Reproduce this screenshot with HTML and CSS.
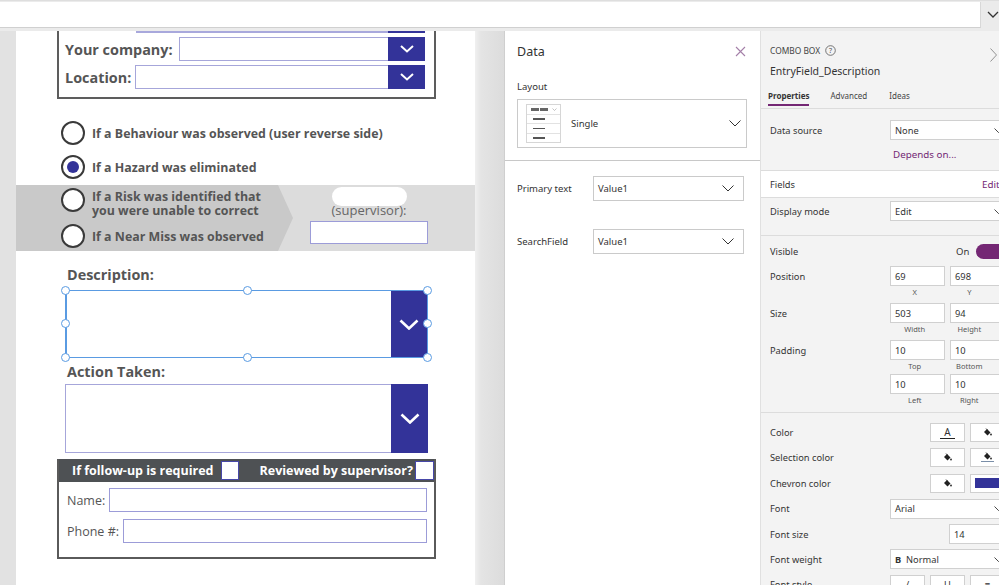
FILE: index.html
```html
<!DOCTYPE html>
<html>
<head>
<meta charset="utf-8">
<link rel="stylesheet" href="styles.css">
</head>
<body>
<div class="topbar">
  <div class="formula"></div>
  <svg class="top-chev" width="12" height="8" viewBox="0 0 12 8"><polyline points="1,1 6,6 11,1" fill="none" stroke="#333" stroke-width="1.3"/></svg>
</div>
<div class="main">
  <div class="canvas-area">
    <div class="gutter"></div>
    <div class="card">
      <div class="topbox">
        <div class="sliver"><div class="sliver-line"></div><div class="sliver-btn"></div></div>
        <div class="field-row">
          <span class="lbl lbl-company">Your company:</span>
          <div class="combo"><div class="chev-btn"><svg width="14" height="8" viewBox="0 0 14 8"><polyline points="1,1 7,6.5 13,1" fill="none" stroke="#fff" stroke-width="2"/></svg></div></div>
        </div>
        <div class="field-row">
          <span class="lbl lbl-loc">Location:</span>
          <div class="combo"><div class="chev-btn"><svg width="14" height="8" viewBox="0 0 14 8"><polyline points="1,1 7,6.5 13,1" fill="none" stroke="#fff" stroke-width="2"/></svg></div></div>
        </div>
      </div>

      <div class="radios">
        <div class="radio"><span class="circle"></span><span class="radio-text">If a Behaviour was observed (user reverse side)</span></div>
        <div class="radio"><span class="circle on"></span><span class="radio-text">If a Hazard was eliminated</span></div>
      </div>

      <div class="band">
        <div class="band-left">
          <div class="radio radio-two"><span class="circle"></span><span class="radio-text two"><span class="ln">If a Risk was identified that</span><span class="ln">you were unable to correct</span></span></div>
          <div class="radio radio-last"><span class="circle"></span><span class="radio-text">If a Near Miss was observed</span></div>
        </div>
        <div class="band-right">
          <div class="blob"></div>
          <div class="sup">(supervisor):</div>
          <div class="sup-input"></div>
        </div>
      </div>

      <div class="sec-label desc-label">Description:</div>
      <div class="bigbox selected">
        <div class="chev-btn big"><svg width="20" height="11" viewBox="0 0 20 11"><polyline points="1.5,1.5 10,9.5 18.5,1.5" fill="none" stroke="#fff" stroke-width="2.6"/></svg></div>
        <span class="handle h-tl"></span><span class="handle h-tm"></span><span class="handle h-tr"></span>
        <span class="handle h-ml"></span><span class="handle h-mr"></span>
        <span class="handle h-bl"></span><span class="handle h-bm"></span><span class="handle h-br"></span>
      </div>
      <div class="sec-label act-label">Action Taken:</div>
      <div class="bigbox plain">
        <div class="chev-btn big"><svg width="20" height="11" viewBox="0 0 20 11"><polyline points="1.5,1.5 10,9.5 18.5,1.5" fill="none" stroke="#fff" stroke-width="2.6"/></svg></div>
      </div>

      <div class="follow">
        <div class="follow-head">
          <span class="fh-text">If follow-up is required</span><span class="chk"></span>
          <span class="fh-text fh-second">Reviewed by supervisor?</span><span class="chk chk2"></span>
        </div>
        <div class="follow-row first"><span class="flbl">Name:</span><div class="finput"></div></div>
        <div class="follow-row"><span class="flbl">Phone #:</span><div class="finput"></div></div>
      </div>
    </div>
    <div class="shade"></div>
  </div>

  <div class="data-panel">
    <div class="dp-top">
      <div class="dp-head"><span class="dp-title">Data</span>
        <svg width="11" height="11" viewBox="0 0 11 11"><path d="M1 1 L10 10 M10 1 L1 10" stroke="#a47fa8" stroke-width="1.1"/></svg>
      </div>
      <div class="dp-label">Layout</div>
      <div class="layout-box">
        <div class="lay-icon">
          <div class="lay-row"><span class="d1"></span><span class="d1"></span><svg width="5" height="3" viewBox="0 0 5 3"><polyline points="0.5,0.5 2.5,2.5 4.5,0.5" fill="none" stroke="#aaa" stroke-width="0.7"/></svg></div>
          <div class="lay-row"><span class="d2"></span></div>
          <div class="lay-row"><span class="d2"></span></div>
          <div class="lay-row"><span class="d2"></span></div>
        </div>
        <span class="lay-text">Single</span>
        <svg class="dd-chev" width="12" height="7" viewBox="0 0 12 7"><polyline points="0.5,0.5 6,6 11.5,0.5" fill="none" stroke="#333" stroke-width="1"/></svg>
      </div>
    </div>
    <div class="dp-fields">
      <div class="dp-row"><span class="dp-rl">Primary text</span><div class="dp-dd"><span>Value1</span><svg width="12" height="7" viewBox="0 0 12 7"><polyline points="0.5,0.5 6,6 11.5,0.5" fill="none" stroke="#333" stroke-width="1"/></svg></div></div>
      <div class="dp-row second"><span class="dp-rl">SearchField</span><div class="dp-dd"><span>Value1</span><svg width="12" height="7" viewBox="0 0 12 7"><polyline points="0.5,0.5 6,6 11.5,0.5" fill="none" stroke="#333" stroke-width="1"/></svg></div></div>
    </div>
  </div>

  <div class="props">
    <div class="p-head">
      <div class="p-kind">COMBO BOX <svg class="qmark" width="11" height="11" viewBox="0 0 11 11"><circle cx="5.5" cy="5.5" r="4.8" fill="none" stroke="#555" stroke-width="0.8"/><text x="5.5" y="8" text-anchor="middle" font-size="7" fill="#555" font-family="Noto Sans">?</text></svg>
        <svg class="p-close" width="7" height="14" viewBox="0 0 7 14"><polyline points="0.5,0.5 6.5,7 0.5,13.5" fill="none" stroke="#888" stroke-width="0.9"/></svg></div>
      <div class="p-name">EntryField_Description</div>
      <div class="p-tabs"><span class="tab active">Properties</span><span class="tab">Advanced</span><span class="tab">Ideas</span></div>
    </div>
    <div class="p-sec sec-ds">
      <div class="p-row"><span class="p-lbl">Data source</span><div class="p-dd">None<svg width="9" height="5" viewBox="0 0 9 5"><polyline points="0.5,0.5 4.5,4.5 8.5,0.5" fill="none" stroke="#333" stroke-width="0.9"/></svg></div></div>
      <div class="depends">Depends on...</div>
    </div>
    <div class="p-sec sec-fields"><span class="p-lbl">Fields</span><span class="edit">Edit</span></div>
    <div class="p-sec sec-dm">
      <div class="p-row"><span class="p-lbl">Display mode</span><div class="p-dd">Edit<svg width="9" height="5" viewBox="0 0 9 5"><polyline points="0.5,0.5 4.5,4.5 8.5,0.5" fill="none" stroke="#333" stroke-width="0.9"/></svg></div></div>
    </div>
    <div class="p-sec sec-geo">
      <div class="p-row vis"><span class="p-lbl">Visible</span><span class="on-text">On</span><span class="toggle"><span class="knob"></span></span></div>
      <div class="p-row g"><span class="p-lbl">Position</span><div class="p-in">69</div><div class="p-in">698</div></div>
      <div class="p-cap"><span>X</span><span>Y</span></div>
      <div class="p-row g"><span class="p-lbl">Size</span><div class="p-in">503</div><div class="p-in">94</div></div>
      <div class="p-cap"><span>Width</span><span>Height</span></div>
      <div class="p-row g"><span class="p-lbl">Padding</span><div class="p-in">10</div><div class="p-in">10</div></div>
      <div class="p-cap"><span>Top</span><span>Bottom</span></div>
      <div class="p-row g g2"><span class="p-lbl"></span><div class="p-in">10</div><div class="p-in">10</div></div>
      <div class="p-cap"><span>Left</span><span>Right</span></div>
    </div>
    <div class="p-sec sec-style">
      <div class="p-row s"><span class="p-lbl">Color</span><span class="spacer"></span>
        <div class="cbtn"><span class="a-glyph">A</span></div>
        <div class="cbtn"><svg width="9" height="9" viewBox="0 0 9 9"><path d="M4 1 L7.5 4.5 L4.5 7.5 L1 4 Z" fill="#222"/><path d="M3 0.5 L4.5 2" stroke="#222" stroke-width="0.8"/><circle cx="8" cy="6.5" r="0.9" fill="#222"/></svg></div>
      </div>
      <div class="p-row s"><span class="p-lbl">Selection color</span><span class="spacer"></span>
        <div class="cbtn"><svg width="9" height="9" viewBox="0 0 9 9"><path d="M4 1 L7.5 4.5 L4.5 7.5 L1 4 Z" fill="#222"/><path d="M3 0.5 L4.5 2" stroke="#222" stroke-width="0.8"/><circle cx="8" cy="6.5" r="0.9" fill="#222"/></svg></div>
        <div class="cbtn ul"><svg width="9" height="9" viewBox="0 0 9 9"><path d="M4 1 L7.5 4.5 L4.5 7.5 L1 4 Z" fill="#222"/><path d="M3 0.5 L4.5 2" stroke="#222" stroke-width="0.8"/><circle cx="8" cy="6.5" r="0.9" fill="#222"/></svg><span class="uline"></span></div>
      </div>
      <div class="p-row s"><span class="p-lbl">Chevron color</span><span class="spacer"></span>
        <div class="cbtn"><svg width="9" height="9" viewBox="0 0 9 9"><path d="M4 1 L7.5 4.5 L4.5 7.5 L1 4 Z" fill="#222"/><path d="M3 0.5 L4.5 2" stroke="#222" stroke-width="0.8"/><circle cx="8" cy="6.5" r="0.9" fill="#222"/></svg></div>
        <div class="cbtn sw"><span class="swatch"></span></div>
      </div>
      <div class="p-row s"><span class="p-lbl">Font</span><div class="p-dd">Arial<svg width="9" height="5" viewBox="0 0 9 5"><polyline points="0.5,0.5 4.5,4.5 8.5,0.5" fill="none" stroke="#333" stroke-width="0.9"/></svg></div></div>
      <div class="p-row s"><span class="p-lbl">Font size</span><span class="spacer"></span><div class="p-in fs">14</div></div>
      <div class="p-row s"><span class="p-lbl">Font weight</span><div class="p-dd"><span><b class="bb">B</b>&nbsp; Normal</span><svg width="9" height="5" viewBox="0 0 9 5"><polyline points="0.5,0.5 4.5,4.5 8.5,0.5" fill="none" stroke="#333" stroke-width="0.9"/></svg></div></div>
      <div class="p-row s"><span class="p-lbl">Font style</span><div class="sbtn">/</div><div class="sbtn">U</div><div class="sbtn">&#8801;</div></div>
    </div>
  </div>
</div>
</body>
</html>
```
FILE: styles.css
```css
* { box-sizing: border-box; }
html, body { margin: 0; padding: 0; }
body {
  width: 999px;
  height: 585px;
  overflow: hidden;
  background: #f3f3f3;
  font-family: "Noto Sans", sans-serif;
  color: #333;
}

/* top formula bar */
.topbar {
  height: 31px;
  background: #ebebeb;
  border-top: 1px solid #dedede;
  display: flex;
  align-items: flex-start;
}
.formula {
  width: 981px;
  height: 26px;
  margin-top: 1px;
  background: #fff;
  border-bottom: 1px solid #d0d0d0;
  border-right: 1px solid #d8d8d8;
}
.top-chev { margin: 10px 0 0 6px; }

.main { display: flex; height: 554px; }

/* canvas */
.canvas-area { width: 505px; display: flex; background: #e2e2e2; flex: none; }
.gutter { width: 16px; }
.card { width: 459px; background: #fff; }
.shade {
  width: 30px;
  background: linear-gradient(to right, #f0f0f0 0, #e4e4e4 6px, #dcdcdc 100%);
  border-right: 1px solid #cfcfcf;
}

.topbox {
  margin-left: 41px;
  width: 379px;
  border: 2px solid #5d5d5d;
  border-top: none;
  padding: 0 9px 8px 6px;
}
.sliver { display: flex; height: 2px; margin-left: 71px; }
.sliver-line { flex: 1; background: #a8a8dc; }
.sliver-btn { width: 37px; background: #333399; }
.field-row { display: flex; align-items: center; height: 24px; margin-top: 4px; }
.lbl {
  font-family: "Open Sans", sans-serif;
  font-weight: 700;
  font-size: 14.4px;
  color: #555;
  white-space: nowrap;
}
.lbl-company { margin-right: 6px; }
.lbl-loc { margin-right: 4px; }
.combo {
  flex: 1;
  height: 24px;
  border: 1px solid #a6a6da;
  background: #fff;
  display: flex;
  justify-content: flex-end;
}
.chev-btn {
  width: 37px;
  background: #333399;
  display: flex;
  align-items: center;
  justify-content: center;
  margin: -1px -1px -1px 0;
}

/* radios */
.radios { margin: 22px 0 0 45px; display: flex; flex-direction: column; gap: 10px; }
.radio { display: flex; align-items: center; height: 24px; }
.circle {
  width: 24px; height: 24px;
  border: 2px solid #3a3a3a;
  border-radius: 50%;
  background: #fff;
  margin-right: 7px;
  flex: none;
  display: flex; align-items: center; justify-content: center;
}
.circle.on::after {
  content: "";
  width: 12px; height: 12px;
  border-radius: 50%;
  background: #333399;
}
.radio-text {
  font-family: "Open Sans", sans-serif;
  font-weight: 700;
  font-size: 12.4px;
  color: #555;
  white-space: nowrap;
}

.band { margin-top: 6px; height: 66px; display: flex; background: #dcdcdc; }
.band-left {
  width: 277px;
  background: #c9c9c9;
  clip-path: polygon(0 0, 262px 0, 277px 50%, 262px 100%, 0 100%);
  padding: 3px 0 0 45px;
}
.radio-two { align-items: flex-start; height: auto; }
.radio-text.two { display: flex; flex-direction: column; margin-top: 2px; font-size: 12.4px; }
.ln { display: block; height: 14px; line-height: 14px; }
.radio-last { margin-top: 6px; }
.band-right { width: 118px; margin-left: 17px; display: flex; flex-direction: column; align-items: center; }
.blob { width: 75px; height: 19px; margin-top: 2px; background: #fff; border-radius: 10px; }
.sup {
  font-family: "Open Sans", sans-serif;
  font-size: 13px;
  line-height: 14px;
  color: #666;
  margin-top: -3px;
}
.sup-input { width: 118px; height: 23px; margin-top: 4px; background: #fff; border: 1px solid #9c9cd8; }

/* description / action */
.sec-label {
  font-family: "Open Sans", sans-serif;
  font-weight: 700;
  font-size: 14.4px;
  line-height: 20px;
  color: #555;
  margin-left: 51px;
}
.desc-label { margin-top: 14px; }
.act-label { margin-top: 4px; }
.bigbox {
  margin-left: 49px;
  width: 363px;
  background: #fff;
  display: flex;
  justify-content: flex-end;
  position: relative;
}
.bigbox.selected { margin-top: 5px; height: 68px; border: 1px solid #5a9be2; border-left-width: 2px; }
.bigbox.plain { margin-top: 2px; height: 69px; border: 1px solid #a6a6da; }
.chev-btn.big { width: 36px; margin: 0; }
.bigbox.plain .chev-btn.big { width: 37px; margin: -1px -1px -1px 0; }
.handle {
  position: absolute;
  width: 9px; height: 9px;
  border-radius: 50%;
  background: #fff;
  border: 1.5px solid #5a9be2;
}
.h-tl { left: -6px; top: -5px; }
.h-tm { left: 176px; top: -5px; }
.h-tr { right: -5px; top: -5px; }
.h-ml { left: -6px; top: 28px; }
.h-mr { right: -5px; top: 28px; }
.h-bl { left: -6px; bottom: -5px; }
.h-bm { left: 176px; bottom: -5px; }
.h-br { right: -5px; bottom: -5px; }

/* follow-up */
.follow {
  margin: 6px 0 0 41px;
  width: 379px;
  height: 100px;
  border: 2px solid #5a5a5a;
  border-top: none;
}
.follow-head {
  height: 23px;
  background: #4e5154;
  display: flex;
  align-items: center;
  padding-left: 13px;
}
.fh-text {
  font-family: "Open Sans", sans-serif;
  font-weight: 700;
  font-size: 12.5px;
  color: #fff;
  white-space: nowrap;
}
.fh-second { margin-left: 21px; }
.chk {
  width: 18px; height: 19px;
  background: #fff;
  border: 1px solid #4747a8;
  margin-left: 7px;
  flex: none;
}
.chk2 { margin-left: 2px; width: 19px; }
.follow-row { display: flex; align-items: center; height: 24px; margin-top: 7px; padding: 0 7px 0 8px; }
.follow-row.first { margin-top: 6px; }
.flbl {
  font-family: "Open Sans", sans-serif;
  font-size: 12.5px;
  color: #555;
  margin-right: 4px;
  white-space: nowrap;
}
.finput { flex: 1; height: 24px; border: 1px solid #9c9cd8; background: #fff; }

/* data panel */
.data-panel { width: 255px; background: #fff; flex: none; font-size: 10px; color: #333; }
.dp-top { padding: 12px 12px 12px 12px; border-bottom: 1px solid #c8c8c8; }
.dp-head { display: flex; justify-content: space-between; align-items: center; height: 16px; padding-right: 2px; }
.dp-title { font-size: 12.5px; color: #333; }
.dp-label { margin-top: 21px; line-height: 14px; font-size: 9.5px; }
.layout-box {
  margin-top: 5px;
  width: 230px;
  height: 49px;
  border: 1px solid #cacaca;
  display: flex;
  align-items: center;
  padding: 0 5px 0 8px;
}
.lay-icon { width: 35px; height: 39px; border: 1px solid #d6d6d6; display: flex; flex-direction: column; }
.lay-row { flex: 1; display: flex; align-items: center; padding-left: 4px; gap: 1px; border-bottom: 1px solid #e2e2e2; }
.lay-row:last-child { border-bottom: none; }
.d1 { width: 8px; height: 3px; background: #666; }
.lay-row svg { margin-left: 3px; }
.d2 { width: 12px; height: 1.5px; background: #555; margin-left: 2px; }
.lay-text { margin-left: 10px; flex: 1; font-size: 9.5px; }
.dp-fields { padding: 15px 15px 0 12px; }
.dp-row { display: flex; align-items: center; height: 25px; }
.dp-row.second { margin-top: 28px; }
.dp-rl { width: 76px; font-size: 9.5px; }
.dp-dd {
  width: 151px; height: 25px;
  border: 1px solid #cacaca;
  display: flex; align-items: center; justify-content: space-between;
  padding: 0 9px 0 4px;
  font-size: 9.5px;
}

/* properties panel */
.props { width: 239px; flex: none; overflow: hidden; background: #f3f3f3; border-left: 1px solid #e0e0e0; font-size: 9.3px; color: #333; }
.p-head { height: 78px; padding: 13px 0 0 9px; border-bottom: 1px solid #dcdcdc; }
.p-kind { height: 12px; font-size: 8.4px; color: #444; display: flex; align-items: center; width: 260px; }
.qmark { margin-left: 5px; }
.p-close { margin-left: 154px; margin-top: 10px; flex: none; }
.p-name { margin-top: 8px; height: 14px; line-height: 14px; font-size: 10.5px; color: #333; }
.p-tabs { margin-top: 10px; display: flex; gap: 0; margin-left: -2px; }
.tab { height: 18px; line-height: 16px; font-size: 8px; color: #444; border-bottom: 2px solid transparent; margin-right: 21px; }
.tab.active { font-weight: 700; color: #333; border-bottom-color: #742774; }
.tab:nth-child(2) { margin-right: 22px; }

.p-sec { border-bottom: 1px solid #dcdcdc; padding-left: 9px; }
.p-row { display: flex; align-items: center; height: 20px; }
.p-lbl { width: 120px; flex: none; }
.p-dd {
  width: 120px; height: 20px; flex: none;
  background: #fff; border: 1px solid #d0d0d0;
  display: flex; align-items: center; justify-content: space-between;
  padding: 0 6px 0 4px;
}
.sec-ds { padding-top: 11px; height: 62px; }
.depends { margin: 8px 0 0 123px; line-height: 14px; color: #742774; font-size: 9.8px; }
.sec-fields { background: #fff; height: 27px; display: flex; align-items: center; }
.edit { margin-left: 92px; color: #742774; font-size: 9.8px; }
.sec-dm { padding-top: 3px; height: 38px; }
.sec-geo { height: 177px; padding-top: 5px; }
.vis { height: 20px; }
.on-text { margin-left: 66px; font-size: 9.5px; }
.toggle { margin-left: 7px; width: 38px; height: 15px; border-radius: 8px; background: #742774; position: relative; flex: none; }
.knob { position: absolute; right: 4px; top: 2.5px; width: 10px; height: 10px; border-radius: 50%; background: #fff; }
.p-row.g { margin-top: 5px; }
.p-row.g2 { margin-top: 2px; }
.p-in {
  width: 55px; height: 20px; flex: none;
  background: #fff; border: 1px solid #d0d0d0;
  padding-left: 4px;
  display: flex; align-items: center;
  margin-right: 5px;
}
.p-cap { display: flex; height: 12px; line-height: 12px; padding-left: 120px; font-size: 7.5px; color: #555; }
.p-cap span { width: 60px; text-align: center; padding-right: 5px; }
.sec-style { border-bottom: none; padding-top: 10px; }
.p-row.s { height: 19px; margin-bottom: 6.4px; }
.spacer { width: 40px; flex: none; }
.cbtn {
  width: 35px; height: 19px; flex: none;
  background: #fff; border: 1px solid #d0d0d0;
  margin-right: 5px;
  display: flex; align-items: center; justify-content: center;
  position: relative;
}
.a-glyph { font-size: 10px; line-height: 11px; border-bottom: 1.5px solid #222; padding: 0 4px; }
.cbtn.ul svg { margin-top: -3px; }
.uline { position: absolute; left: 10px; right: 10px; bottom: 4px; height: 1.5px; background: #7a8ea8; }
.cbtn.sw { justify-content: flex-start; padding-left: 4px; }
.swatch { width: 40px; height: 10px; background: #333399; }
.p-in.fs { margin-left: 19px; width: 60px; }
.bb { font-weight: 700; }
.sbtn {
  width: 35px; height: 19px; flex: none;
  background: #fff; border: 1px solid #d0d0d0;
  margin-right: 5px;
  display: flex; align-items: center; justify-content: center;
}
```
